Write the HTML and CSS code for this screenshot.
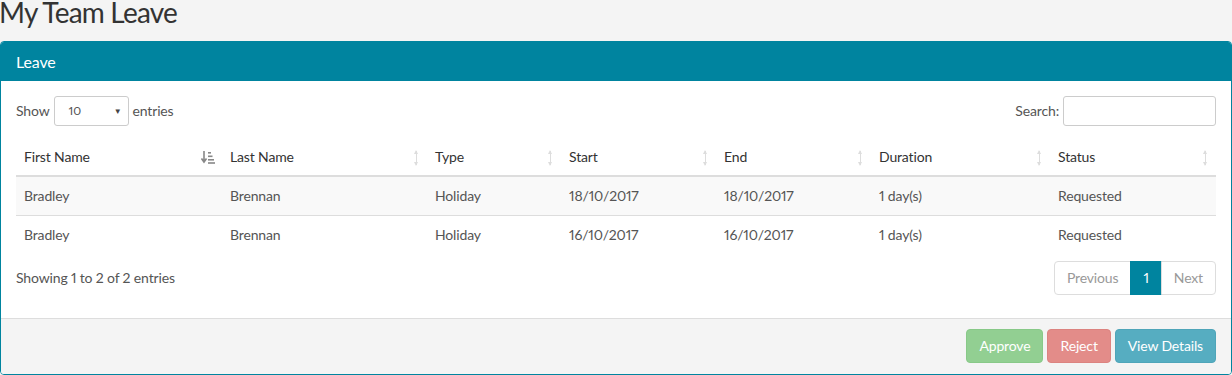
FILE: index.html
```html
<!DOCTYPE html>
<html lang="en">
<head>
  <meta charset="UTF-8">
  <title>My Team Leave</title>
  <link rel="stylesheet" href="styles.css">
</head>
<body>

<h1 class="page-title">My Team Leave</h1>

<div class="panel">
  <div class="panel-heading">Leave</div>

  <div class="panel-body">
    <!-- Length + search controls -->
    <div class="dt-top">
      <label class="dt-length">Show
        <span class="fake-select">10 <span class="caret">&#9660;</span></span>
        entries</label>
      <label class="dt-search">Search: <input type="text" class="search-input"></label>
    </div>

    <table class="leave-table">
      <colgroup>
        <col style="width: 206px">
        <col style="width: 205px">
        <col style="width: 134px">
        <col style="width: 155px">
        <col style="width: 155px">
        <col style="width: 179px">
        <col style="width: 166px">
      </colgroup>
      <thead>
        <tr>
          <th class="sorted">First Name
            <svg class="sort-icon" viewBox="0 0 14 14" width="14" height="14">
              <path d="M3 1v10M0.5 8.5L3 12l2.5-3.5" fill="none" stroke="#888" stroke-width="1.6"/>
              <rect x="7" y="2" width="3" height="1.6" fill="#888"/>
              <rect x="7" y="5.5" width="4.5" height="1.6" fill="#888"/>
              <rect x="7" y="9" width="6" height="1.6" fill="#888"/>
              <rect x="7" y="12.2" width="7" height="1.6" fill="#888"/>
            </svg>
          </th>
          <th>Last Name <span class="sort-both"></span></th>
          <th>Type <span class="sort-both"></span></th>
          <th>Start <span class="sort-both"></span></th>
          <th>End <span class="sort-both"></span></th>
          <th>Duration <span class="sort-both"></span></th>
          <th>Status <span class="sort-both"></span></th>
        </tr>
      </thead>
      <tbody>
        <tr class="odd">
          <td>Bradley</td><td>Brennan</td><td>Holiday</td><td>18/10/2017</td><td>18/10/2017</td><td>1 day(s)</td><td>Requested</td>
        </tr>
        <tr>
          <td>Bradley</td><td>Brennan</td><td>Holiday</td><td>16/10/2017</td><td>16/10/2017</td><td>1 day(s)</td><td>Requested</td>
        </tr>
      </tbody>
    </table>

    <div class="dt-bottom">
      <div class="dt-info">Showing 1 to 2 of 2 entries</div>
      <ul class="pagination">
        <li class="disabled">Previous</li>
        <li class="active">1</li>
        <li class="disabled">Next</li>
      </ul>
    </div>
  </div>

  <div class="panel-footer">
    <button class="btn btn-approve">Approve</button>
    <button class="btn btn-reject">Reject</button>
    <button class="btn btn-details">View Details</button>
  </div>
</div>

</body>
</html>
```

FILE: styles.css
```css
/* Page */
body {
  margin: 0;
  background-color: #f4f4f4;
  font-family: Lato, "Open Sans", sans-serif;
  font-size: 14px;
  line-height: 20px;
  color: #555;
  font-variant-numeric: proportional-nums;
  letter-spacing: -0.15px;
}
.page-title {
  margin: -1px 0 15px -1px;
  font-size: 28px;
  font-weight: normal;
  line-height: 27px;
  letter-spacing: -0.8px;
  color: #333;
}

/* Panel */
.panel {
  border: 1px solid #00849f;
  border-radius: 4px;
  background-color: white;
  overflow: hidden;
}
.panel-heading {
  background-color: #00849f;
  color: white;
  font-size: 16px;
  line-height: 19px;
  padding: 10px 15px;
}
.panel-body {
  padding: 15px 15px 23px;
}
.panel-footer {
  background-color: #f4f4f4;
  border-top: 1px solid #ddd;
  padding: 10px 15px 11px;
  display: flex;
  justify-content: flex-end;
  gap: 4px;
}

/* Top controls */
.dt-top {
  display: flex;
  justify-content: space-between;
  align-items: center;
  height: 30px;
}
.dt-length, .dt-search {
  display: flex;
  align-items: center;
  gap: 4px;
}
.fake-select {
  display: flex;
  align-items: center;
  justify-content: space-between;
  box-sizing: border-box;
  width: 75px;
  height: 30px;
  padding: 0 6px 0 14px;
  border: 1px solid #ccc;
  border-radius: 3px;
  font-size: 12px;
  color: #555;
}
.caret {
  font-size: 8px;
  color: #444;
}
.search-input {
  box-sizing: border-box;
  width: 153px;
  height: 30px;
  border: 1px solid #ccc;
  border-radius: 3px;
  margin: 0;
}

/* Table */
.leave-table {
  width: 1200px;
  margin-top: 13px;
  border-collapse: collapse;
  table-layout: fixed;
}
.leave-table th {
  position: relative;
  text-align: left;
  font-weight: normal;
  color: #333;
  padding: 8px 8px;
  border-bottom: 2px solid #ddd;
}
.leave-table td {
  padding: 9px 8px;
  border-top: 1px solid #ddd;
}
.leave-table tr.odd td {
  background-color: #f9f9f9;
}
.sort-icon {
  position: absolute;
  right: 7px;
  top: 11px;
}
.sort-both {
  position: absolute;
  right: 10px;
  top: 12px;
  width: 1px;
  height: 14px;
  background-color: #ddd;
}
.sort-both::before,
.sort-both::after {
  content: "";
  position: absolute;
  left: -2px;
  border-left: 2.5px solid transparent;
  border-right: 2.5px solid transparent;
}
.sort-both::before {
  top: -1px;
  border-bottom: 4px solid #ddd;
}
.sort-both::after {
  bottom: -1px;
  border-top: 4px solid #ddd;
}

/* Bottom controls */
.dt-bottom {
  display: flex;
  justify-content: space-between;
  align-items: flex-start;
  margin-top: 7px;
}
.dt-info {
  padding-top: 7px;
}
.pagination {
  display: flex;
  list-style: none;
  margin: 0;
  padding: 0;
}
.pagination li {
  padding: 6px 12px;
  border: 1px solid #ddd;
  margin-left: -1px;
  color: #999;
  background-color: white;
}
.pagination li:first-child {
  border-radius: 4px 0 0 4px;
}
.pagination li:last-child {
  border-radius: 0 4px 4px 0;
}
.pagination li.active {
  background-color: #00849f;
  border-color: #00849f;
  color: white;
}

/* Buttons */
.btn {
  box-sizing: border-box;
  height: 34px;
  font-family: inherit;
  font-size: 14px;
  line-height: 20px;
  letter-spacing: -0.15px;
  padding: 6px 12px;
  border: 1px solid transparent;
  border-radius: 4px;
  color: white;
  cursor: pointer;
}
.btn-approve {
  background-color: #92cf92;
  border-color: #88c988;
}
.btn-reject {
  background-color: #e38c89;
  border-color: #dc8380;
}
.btn-details {
  background-color: #56adc1;
  border-color: #4fa5b9;
}
```
